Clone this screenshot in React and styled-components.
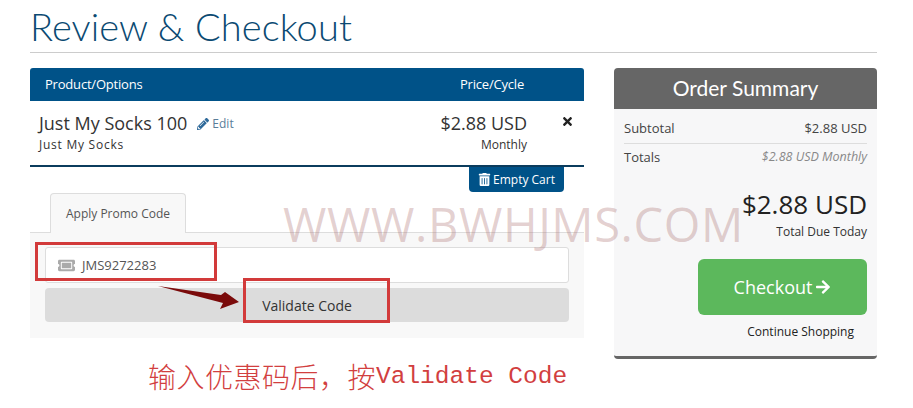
import styled, { createGlobalStyle } from 'styled-components'
import { FaPencilAlt, FaTrashAlt, FaTimes, FaArrowRight, FaTicketAlt } from 'react-icons/fa'

const GlobalStyle = createGlobalStyle`
  html, body {
    margin: 0;
    padding: 0;
    background: #fff;
  }
  body {
    font-family: "Open Sans", "Liberation Sans", sans-serif;
    color: #333;
  }
  * {
    box-sizing: border-box;
  }
`

const Page = styled.div`
  position: relative;
  width: 913px;
  height: 408px;
  padding: 0 36px 0 30px;
  overflow: hidden;
`

const Title = styled.h1`
  margin: 0;
  height: 53px;
  padding-top: 4px;
  border-bottom: 1px solid #ccc;
  font-family: Lato, sans-serif;
  font-weight: 300;
  font-size: 38px;
  line-height: 44px;
  letter-spacing: 0.1px;
  color: #0b4a72;
`

const Columns = styled.div`
  display: flex;
  gap: 30px;
  margin-top: 15px;
  align-items: flex-start;
`

const Main = styled.div`
  width: 554px;
`

const TableHead = styled.div`
  display: flex;
  justify-content: space-between;
  height: 33px;
  padding: 0 60px 2px 15px;
  align-items: center;
  background: #005288;
  border-radius: 3px 3px 0 0;
  color: #fff;
  font-size: 13px;
  letter-spacing: -0.2px;
`

const ItemRow = styled.div`
  position: relative;
  display: flex;
  justify-content: space-between;
  height: 66px;
  padding: 10px 57px 0 9px;
  border-bottom: 2px solid #0b3c5d;
`

const ItemName = styled.div`
  display: flex;
  align-items: center;
  font-size: 18px;
  line-height: 25px;
  color: #333;
`

const EditLink = styled.span`
  display: inline-flex;
  align-items: center;
  gap: 3px;
  margin-left: 10px;
  font-size: 12px;
  color: #5a7d99;

  svg {
    font-size: 12px;
    color: #2f6a9a;
  }
`

const Sub = styled.div`
  font-size: 12px;
  line-height: 18px;
  color: #333;
  letter-spacing: ${p => (p.$spaced ? '0.75px' : '0')};
`

const PriceCell = styled.div`
  text-align: right;
`

const Price = styled.div`
  font-size: 18px;
  line-height: 25px;
  color: #333;
`

const Remove = styled.span`
  position: absolute;
  top: 14px;
  right: 10px;
  display: flex;
  font-size: 13px;
  color: #222;
`

const CartActions = styled.div`
  display: flex;
  justify-content: flex-end;
  padding-right: 20px;
`

const EmptyCart = styled.button`
  display: flex;
  align-items: center;
  justify-content: center;
  gap: 2px;
  width: 95px;
  height: 25px;
  padding: 0;
  border: 0;
  border-radius: 0 0 4px 4px;
  background: #005288;
  color: #fff;
  font-family: inherit;
  font-size: 12px;

  svg {
    font-size: 13px;
  }
`

const Tabs = styled.div`
  display: flex;
  margin-top: 1px;
  padding-left: 20px;
  height: 40px;
  border-bottom: 1px solid #ddd;
`

const Tab = styled.div`
  display: flex;
  align-items: center;
  justify-content: center;
  width: 136px;
  height: 40px;
  background: #f8f8f8;
  border: 1px solid #ddd;
  border-bottom: 0;
  border-radius: 4px 4px 0 0;
  font-size: 12px;
  color: #555;
`

const PromoPanel = styled.div`
  display: flex;
  flex-direction: column;
  gap: 5px;
  height: 105px;
  padding: 14px 15px 0;
  background: #f8f8f8;
`

const PromoInput = styled.div`
  display: flex;
  align-items: center;
  gap: 7px;
  height: 36px;
  padding-left: 12px;
  background: #fff;
  border: 1px solid #ddd;
  border-radius: 3px;
  font-size: 13px;
  color: #555;

  svg {
    font-size: 17px;
    color: #aaa;
  }
`

const ValidateButton = styled.button`
  height: 34px;
  padding: 0;
  border: 0;
  border-radius: 4px;
  background: #dcdcdc;
  color: #333;
  font-family: inherit;
  font-size: 14px;
`

const Note = styled.div`
  display: flex;
  align-items: center;
  height: 30px;
  margin: 23px 0 0 118px;
  color: #d23f3f;
  white-space: nowrap;
`

const NoteCjk = styled.span`
  font-family: "Noto Sans CJK SC", sans-serif;
  font-weight: 300;
  font-size: 28px;
  letter-spacing: 0.5px;
`

const NoteLatin = styled.span`
  font-family: "Liberation Mono", monospace;
  font-size: 24.5px;
`

const Summary = styled.aside`
  width: 263px;
  height: 291px;
  background: #f7f7f8;
  border-bottom: 3px solid #666;
  border-radius: 4px;
  overflow: hidden;
`

const SummaryTitle = styled.div`
  height: 41px;
  background: #666;
  color: #fff;
  font-family: Lato, sans-serif;
  font-size: 21px;
  line-height: 40px;
  text-align: center;
`

const SummaryBody = styled.div`
  display: flex;
  flex-direction: column;
  padding: 7px 10px 0;
`

const SummaryRow = styled.div`
  display: flex;
  justify-content: space-between;
  align-items: center;
  height: ${p => p.$h}px;
  padding-bottom: ${p => (p.$line ? '4px' : '2px')};
  font-size: 13px;
  color: #444;
  border-bottom: ${p => (p.$line ? '1px solid #ddd' : '0')};
`

const Recurring = styled.span`
  font-size: 12.5px;
  font-style: italic;
  color: #888;
`

const Total = styled.div`
  margin-top: 16px;
  font-size: 26px;
  line-height: 34px;
  color: #222;
  text-align: right;
`

const TotalLabel = styled.div`
  margin-top: 1px;
  font-size: 12px;
  line-height: 20px;
  color: #333;
  text-align: right;
`

const CheckoutButton = styled.button`
  display: flex;
  align-items: center;
  justify-content: center;
  gap: 3px;
  align-self: flex-end;
  width: 169px;
  height: 56px;
  margin-top: 17px;
  border: 0;
  border-radius: 6px;
  background: #5cb85c;
  color: #fff;
  font-family: inherit;
  font-size: 18px;

  svg {
    font-size: 16px;
  }
`

const Continue = styled.div`
  margin: 8px 13px 0 0;
  font-size: 12px;
  line-height: 18px;
  color: #222;
  text-align: right;
`

const Watermark = styled.div`
  position: absolute;
  left: 283px;
  top: 194px;
  font-family: "Open Sans", sans-serif;
  font-size: 47px;
  line-height: 60px;
  letter-spacing: 0.6px;
  color: rgba(170, 110, 110, 0.32);
  white-space: nowrap;
  pointer-events: none;
`

const Callout = styled.div`
  position: absolute;
  left: ${p => p.$x}px;
  top: ${p => p.$y}px;
  width: ${p => p.$w}px;
  height: ${p => p.$h}px;
  border: 3px solid #d23a3a;
`

const Arrow = styled.svg`
  position: absolute;
  left: 155px;
  top: 282px;
`

export default function App() {
  return (
    <Page>
      <GlobalStyle />
      <Title>Review &amp; Checkout</Title>
      <Columns>
        <Main>
          <TableHead>
            <span>Product/Options</span>
            <span>Price/Cycle</span>
          </TableHead>
          <ItemRow>
            <div>
              <ItemName>
                Just My Socks 100
                <EditLink><FaPencilAlt />Edit</EditLink>
              </ItemName>
              <Sub $spaced>Just My Socks</Sub>
            </div>
            <PriceCell>
              <Price>$2.88 USD</Price>
              <Sub>Monthly</Sub>
            </PriceCell>
            <Remove><FaTimes /></Remove>
          </ItemRow>
          <CartActions>
            <EmptyCart><FaTrashAlt />Empty Cart</EmptyCart>
          </CartActions>
          <Tabs>
            <Tab>Apply Promo Code</Tab>
          </Tabs>
          <PromoPanel>
            <PromoInput><FaTicketAlt />JMS9272283</PromoInput>
            <ValidateButton>Validate Code</ValidateButton>
          </PromoPanel>
          <Note>
            <NoteCjk>输入优惠码后，按</NoteCjk>
            <NoteLatin>Validate Code</NoteLatin>
          </Note>
        </Main>
        <Summary>
          <SummaryTitle>Order Summary</SummaryTitle>
          <SummaryBody>
            <SummaryRow $h={28} $line>
              <span>Subtotal</span>
              <span>$2.88 USD</span>
            </SummaryRow>
            <SummaryRow $h={27}>
              <span>Totals</span>
              <Recurring>$2.88 USD Monthly</Recurring>
            </SummaryRow>
            <Total>$2.88 USD</Total>
            <TotalLabel>Total Due Today</TotalLabel>
            <CheckoutButton>Checkout<FaArrowRight /></CheckoutButton>
            <Continue>Continue Shopping</Continue>
          </SummaryBody>
        </Summary>
      </Columns>
      <Watermark>WWW.BWHJMS.COM</Watermark>
      <Callout $x={35} $y={242} $w={182} $h={39} />
      <Callout $x={243} $y={278} $w={147} $h={45} />
      <Arrow width="90" height="30" viewBox="0 0 90 30">
        <path d="M3 4 L66 13 L70 10 L84 20 L65 27 L68 21 Z" fill="#7a0a0a" />
      </Arrow>
    </Page>
  )
}
